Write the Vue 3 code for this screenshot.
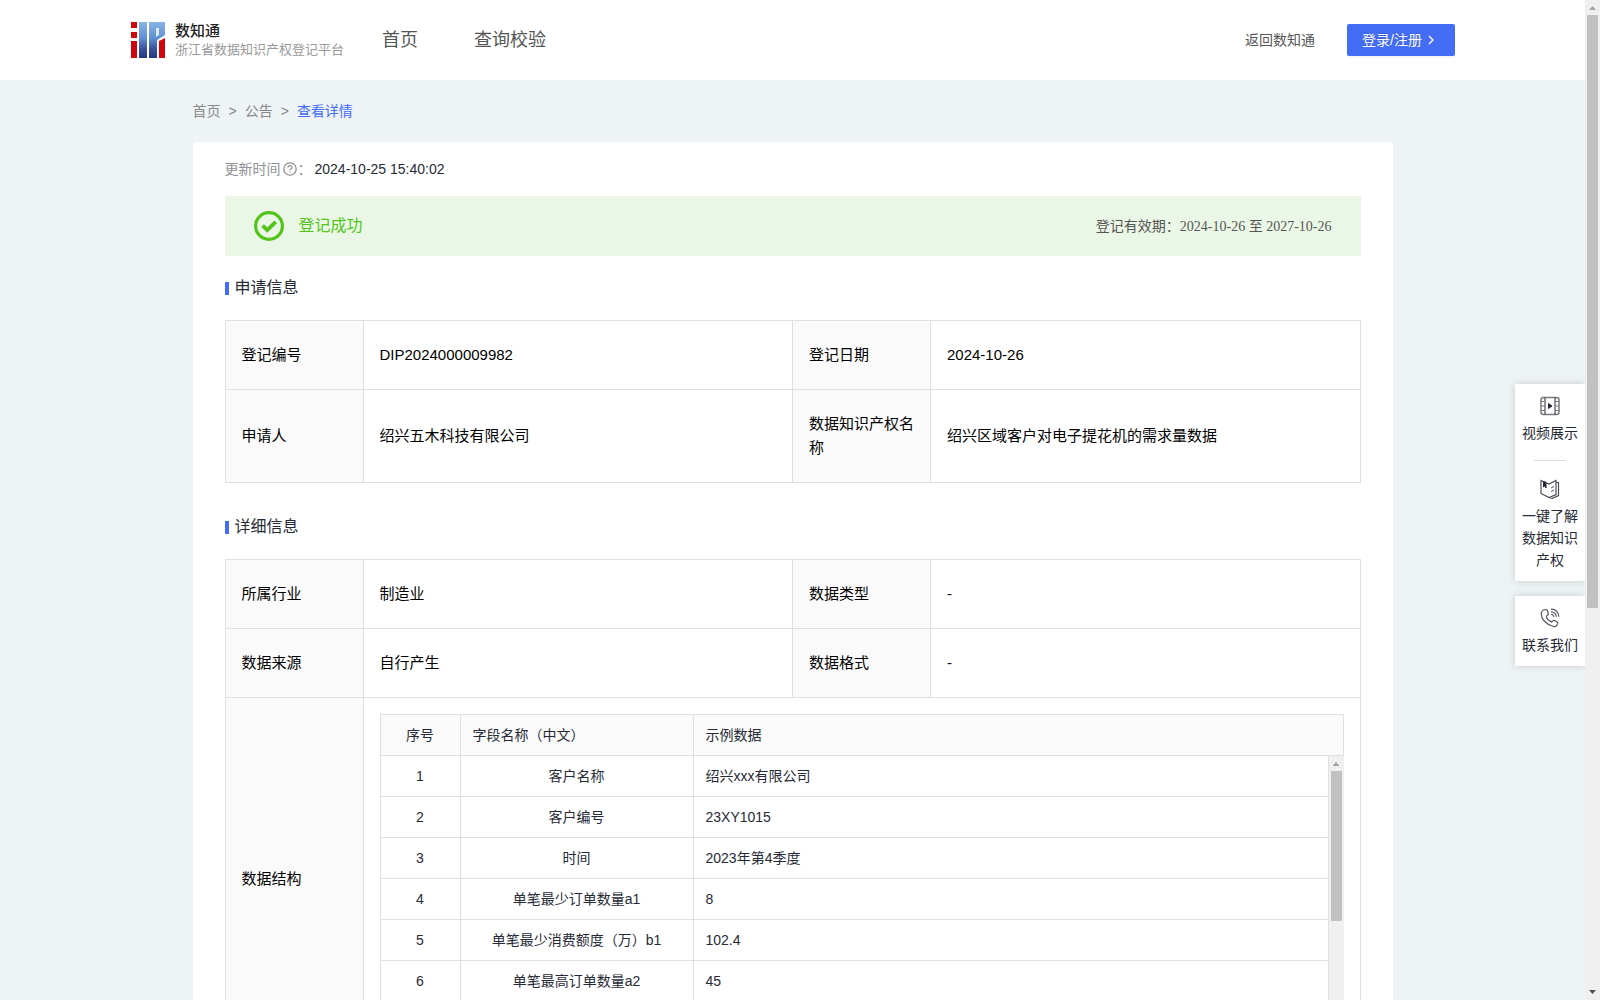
<script setup>
const applyRows = [
  ['登记编号', 'DIP2024000009982', '登记日期', '2024-10-26'],
  ['申请人', '绍兴五木科技有限公司', '数据知识产权名称', '绍兴区域客户对电子提花机的需求量数据'],
]
const detailRows = [
  ['所属行业', '制造业', '数据类型', '-'],
  ['数据来源', '自行产生', '数据格式', '-'],
]
const fields = [
  ['客户名称', '绍兴xxx有限公司'],
  ['客户编号', '23XY1015'],
  ['时间', '2023年第4季度'],
  ['单笔最少订单数量a1', '8'],
  ['单笔最少消费额度（万）b1', '102.4'],
  ['单笔最高订单数量a2', '45'],
]
</script>

<template>
  <div class="window">
    <div class="viewport">
      <header class="header">
        <a class="brand" href="#">
          <svg class="brand-mark" viewBox="0 0 34 36" aria-hidden="true">
            <defs>
              <linearGradient id="blue" x1="0" y1="0" x2="0" y2="1">
                <stop offset="0" stop-color="#86b4e6" />
                <stop offset="0.45" stop-color="#5f8fd2" />
                <stop offset="0.75" stop-color="#3a509c" />
                <stop offset="1" stop-color="#27367f" />
              </linearGradient>
            </defs>
            <path fill="#d0060e" d="M0 0h6v6H0zM0 10h6v6H0zM0 19h6v17H0z" />
            <path fill="url(#blue)" d="M8 0h8v36H8zM18 0h16v13l-8 5v18h-8z" />
            <path fill="#dbe8f7" d="M25 6h3v7l-3 2z" />
            <path fill="#d0060e" d="M28 19l6-3v20h-6z" />
          </svg>
          <span class="brand-text">
            <strong>数知通</strong>
            <small>浙江省数据知识产权登记平台</small>
          </span>
        </a>
        <nav class="nav">
          <a href="#">首页</a>
          <a href="#">查询校验</a>
        </nav>
        <a class="back" href="#">返回数知通</a>
        <button class="login" type="button">
          <span>登录/注册</span>
          <svg viewBox="0 0 12 12" aria-hidden="true"><path d="M4 2l4 4-4 4" fill="none" stroke="currentColor" stroke-width="1.4" /></svg>
        </button>
      </header>

      <main class="content">
        <nav class="crumbs">
          <a href="#">首页</a><span>&gt;</span><a href="#">公告</a><span>&gt;</span><a class="current" href="#">查看详情</a>
        </nav>

        <article class="card">
          <p class="updated">
            <span>更新时间</span>
            <svg viewBox="0 0 14 14" fill="none" stroke="currentColor" aria-hidden="true">
              <circle cx="7" cy="7" r="6.2" stroke-width="1.3" />
              <path d="M5 5.6c0-2.600 4-2.600 4 0 0 1.400-2 1.400-2 2.600M7 9.400v1.200" stroke-width="1.3" />
            </svg>
            <span>：</span>
            <time>2024-10-25 15:40:02</time>
          </p>

          <div class="banner">
            <svg viewBox="0 0 30 30" fill="none" stroke="currentColor" aria-hidden="true">
              <circle cx="15" cy="15" r="13.4" stroke-width="3.2" />
              <path d="M8.600 14.600l4.600 4.600 8.600-8.400" stroke-width="3.8" />
            </svg>
            <span class="status">登记成功</span>
            <span class="term">登记有效期：<span class="dates">2024-10-26 至 2027-10-26</span></span>
          </div>

          <h2 class="title">申请信息</h2>
          <table class="info">
            <colgroup><col class="key" /><col /><col class="key" /><col /></colgroup>
            <tbody>
              <tr v-for="row in applyRows" :key="row[0]">
                <th scope="row">{{ row[0] }}</th>
                <td>{{ row[1] }}</td>
                <th scope="row">{{ row[2] }}</th>
                <td>{{ row[3] }}</td>
              </tr>
            </tbody>
          </table>

          <h2 class="title">详细信息</h2>
          <table class="info">
            <colgroup><col class="key" /><col /><col class="key" /><col /></colgroup>
            <tbody>
              <tr v-for="row in detailRows" :key="row[0]">
                <th scope="row">{{ row[0] }}</th>
                <td>{{ row[1] }}</td>
                <th scope="row">{{ row[2] }}</th>
                <td>{{ row[3] }}</td>
              </tr>
              <tr>
                <th scope="row">数据结构</th>
                <td class="nested" colspan="3">
                  <table class="fields">
                    <colgroup><col class="no" /><col class="name" /><col /></colgroup>
                    <thead>
                      <tr><th class="center" scope="col">序号</th><th scope="col">字段名称（中文）</th><th scope="col">示例数据</th></tr>
                    </thead>
                  </table>
                  <div class="scroller">
                    <div class="rows">
                      <table class="fields">
                        <colgroup><col class="no" /><col class="name" /><col /></colgroup>
                        <tbody>
                          <tr v-for="(field, i) in fields" :key="field[0]">
                            <td class="center">{{ i + 1 }}</td>
                            <td class="center">{{ field[0] }}</td>
                            <td>{{ field[1] }}</td>
                          </tr>
                        </tbody>
                      </table>
                    </div>
                    <div class="scrollbar" aria-hidden="true">
                      <i class="arrow up"></i>
                      <i class="thumb short"></i>
                      <i class="arrow down"></i>
                    </div>
                  </div>
                </td>
              </tr>
            </tbody>
          </table>
        </article>
      </main>
    </div>

    <div class="scrollbar" aria-hidden="true">
      <i class="arrow up"></i>
      <i class="thumb"></i>
      <i class="arrow down"></i>
    </div>

    <aside class="float">
      <div class="panel">
        <a href="#">
          <svg viewBox="0 0 20 20" fill="none" stroke="#262a36" aria-hidden="true">
            <rect x="1" y="1.500" width="18" height="17" rx="2.500" stroke="#77797f" stroke-width="1.500" />
            <path d="M1 5.500h3.500M1 10h3.500M1 14.500h3.500M15.500 5.500H19M15.500 10H19M15.500 14.500H19" stroke="#77797f" />
            <path d="M5 1.500v17M15 1.500v17" />
            <path d="M8.500 7.500l3.500 2.500-3.500 2.500z" fill="#262a36" />
          </svg>
          <span>视频展示</span>
        </a>
        <hr />
        <a href="#">
          <svg viewBox="0 0 20 20" fill="none" stroke="#4a4d56" aria-hidden="true">
            <path d="M1 1.500l8 3.500 7-3.500v14L9 18.500l-8-4zM16 3.500h2.500v13L12 19.500l-3-1" stroke-width="1.200" />
            <path d="M11 9l3-1.500M11 12.500l3-1.500" />
            <path d="M3.500 2.500v5.500l1.200-1 1.300 2V3.500z" fill="#262a36" stroke="#262a36" />
          </svg>
          <span>一键了解数据知识产权</span>
        </a>
      </div>
      <div class="panel">
        <a href="#">
          <svg viewBox="0 0 20 20" fill="none" stroke="#55585f" stroke-width="1.200" aria-hidden="true">
            <path d="M3.500 2L6 1.500q1 0 1.300 1l1 3q.2 1-.6 1.500L6.500 8q-.5 3 5 6l1.500-1.300q.8-.6 1.600-.2l2.700 1.700q.9.600.4 1.500l-1.200 2q-1 1.300-3 .8C6 16.500 1 11 1.300 5q.2-2 2.200-3z" />
            <path d="M11 1.200q7 0 7.800 7.600M11 3.800q4.800.2 5.400 5M11.200 6.400q2.200.2 2.600 2.400" />
          </svg>
          <span>联系我们</span>
        </a>
      </div>
    </aside>
  </div>
</template>

<style>
body {
  margin: 0;
}
</style>

<style scoped>
.window {
  display: flex;
  position: relative;
  height: 100vh;
  overflow: hidden;
  background: #eef3f6;
  color: #262a36;
  font: 14px/22px "Liberation Sans", "Noto Sans CJK SC", sans-serif;
}
a {
  color: inherit;
  text-decoration: none;
}
.viewport {
  flex: 1;
  min-width: 0;
  overflow: auto;
  scrollbar-width: none;
}
.header {
  display: flex;
  align-items: center;
  height: 80px;
  padding: 0 130px 0 131px;
  background: #fff;
  color: #555;
}
.brand {
  display: flex;
  align-items: center;
  gap: 10px;
  width: 251px;
}
.brand-mark {
  width: 34px;
  height: 36px;
}
.brand-text {
  display: flex;
  flex-direction: column;
  white-space: nowrap;
}
.brand strong {
  color: #222;
  font-size: 15px;
  line-height: 20px;
  font-weight: 500;
}
.brand small {
  color: #999;
  font-size: 13px;
  line-height: 18px;
}
.nav {
  display: flex;
  flex: 1;
  gap: 56px;
  font-size: 18px;
}
.back {
  margin-right: 32px;
}
.login {
  display: flex;
  align-items: center;
  gap: 3px;
  width: 108px;
  height: 32px;
  padding: 0 15px;
  border: 0;
  border-radius: 2px;
  background: #446df6;
  box-shadow: 0 2px 0 rgba(0, 0, 0, 0.04);
  color: #fff;
  font: inherit;
  white-space: nowrap;
  text-shadow: 0 -1px 0 rgba(0, 0, 0, 0.12);
}
.login svg {
  flex: none;
  width: 12px;
  height: 12px;
}
.content {
  max-width: 1200px;
  margin: 0 auto;
}
.crumbs {
  display: flex;
  gap: 8px;
  padding: 20px 0;
  color: #888;
}
.crumbs .current {
  color: #446df6;
}
.card {
  padding: 16px 32px 32px;
  border-radius: 4px;
  background: #fff;
}
.updated {
  display: flex;
  align-items: center;
  margin: 0 0 16px;
  color: #909196;
}
.updated svg {
  width: 14px;
  height: 14px;
  margin: 0 1px 0 2px;
}
.updated time {
  margin-left: 3px;
  color: #262a36;
}
.banner {
  display: flex;
  align-items: center;
  height: 60px;
  padding: 0 29px;
  background: #ebf7e6;
  color: #52c41a;
}
.banner svg {
  width: 30px;
  height: 30px;
  margin-right: 15px;
}
.status {
  flex: 1;
  font-size: 16px;
}
.term {
  color: #555;
}
.dates {
  font-family: "Liberation Serif", "Noto Sans CJK SC", serif;
}
.title {
  display: flex;
  align-items: center;
  gap: 6px;
  margin: 0;
  padding: 20px 0;
  font-size: 16px;
  line-height: 24px;
  font-weight: 400;
}
.title::before {
  width: 4px;
  height: 13px;
  background: #446df6;
  content: "";
}
.info + .title {
  padding: 32px 0 20px;
}
table {
  width: 100%;
  border-collapse: collapse;
  table-layout: fixed;
}
th {
  background: #fafafa;
  font-weight: 400;
  text-align: left;
}
th,
td {
  border: 1px solid #e0e0e0;
}
.key {
  width: 138px;
}
.info {
  color: #000;
  font-size: 15px;
  line-height: 24px;
}
.info th,
.info td {
  padding: 22px 16px;
}
.info .nested {
  padding: 16px;
}
.fields {
  color: #262a36;
  font-size: 14px;
  line-height: 22px;
}
.fields .no {
  width: 80px;
}
.fields .name {
  width: 233px;
}
.info .fields th,
.info .fields td {
  padding: 9px 12px;
}
.info .fields .center {
  text-align: center;
}
.scroller {
  display: flex;
  height: 288px;
}
.rows {
  flex: 1;
  overflow: hidden;
}
.rows tr:first-child td {
  border-top: 0;
}
.scrollbar {
  display: flex;
  flex: none;
  flex-direction: column;
  align-items: center;
  width: 15px;
  background: #f0f0f0;
}
.arrow {
  width: 7px;
  height: 4px;
  margin: 6px 0 5px;
  background: #a3a3a3;
  clip-path: polygon(50% 0, 100% 100%, 0 100%);
}
.arrow.down {
  margin: auto 0 6px;
  background: #505050;
  clip-path: polygon(0 0, 100% 0, 50% 100%);
}
.thumb {
  width: 11px;
  height: 59.3%;
  background: #c1c1c1;
}
.thumb.short {
  height: 52%;
}
.float {
  display: flex;
  position: absolute;
  top: 384px;
  right: 15px;
  flex-direction: column;
  gap: 15px;
  width: 70px;
}
.panel {
  padding: 12px 7px 10px;
  background: #fff;
  box-shadow: 0 0 8px rgba(0, 0, 0, 0.16);
  clip-path: inset(-10px 0 -10px -10px);
}
.panel a {
  display: flex;
  flex-direction: column;
  align-items: center;
  gap: 6px;
  text-align: center;
}
.panel svg {
  width: 20px;
  height: 20px;
}
.panel hr {
  width: 32px;
  margin: 16px auto 18px;
  border: 0;
  border-top: 1px solid #ddd;
}
</style>
